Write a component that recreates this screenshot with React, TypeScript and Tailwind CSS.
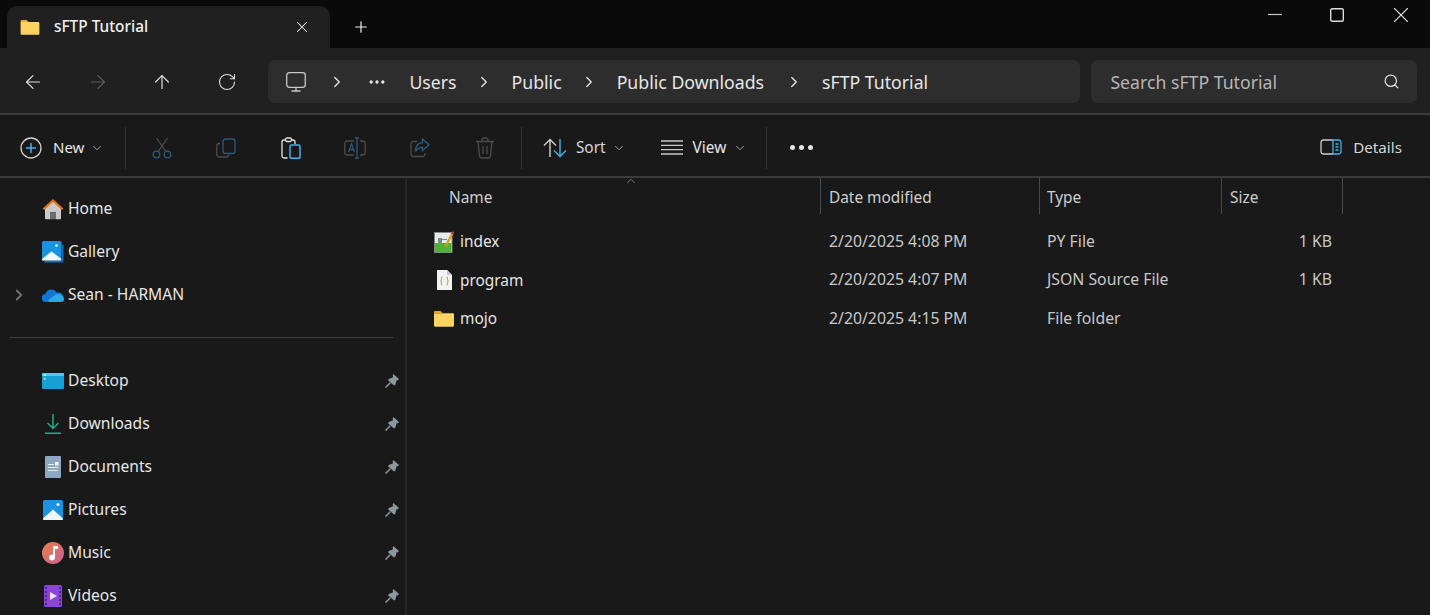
import React from 'react';
import { ArrowLeft, ArrowRight, ArrowUp, RotateCw, ChevronRight, ChevronDown, ChevronUp, X, Plus, Search, Ellipsis } from 'lucide-react';

const FONT = "font-['Noto_Sans',sans-serif]";

function FolderIcon({ className }: { className?: string }) {
  return (
    <svg viewBox="0 0 20 16" className={className}>
      <path d="M0 1.2C0 .5.5 0 1.2 0h5.3l2 2H0z" fill="#f0a91c" />
      <path d="M0 2.2h18.8c.7 0 1.2.5 1.2 1.2v11.2c0 .7-.5 1.2-1.2 1.2H1.2C.5 15.8 0 15.3 0 14.6z" fill="#fcd45f" />
    </svg>
  );
}

function CutIcon() {
  return (
    <svg viewBox="0 0 20 22" className="h-[22px] w-5" fill="none" stroke="#2b5b7c" strokeWidth="1.3">
      <circle cx="4.5" cy="17.5" r="3.3" />
      <circle cx="15.5" cy="17.5" r="3.3" />
      <path d="M6.2 14.7 15.5 1M13.8 14.7 4.5 1" stroke="#4c4c4c" />
    </svg>
  );
}

function CopyIcon() {
  return (
    <svg viewBox="0 0 20 20" className="h-5 w-5" fill="none" strokeWidth="1.3">
      <path d="M4 5.5H3a2.2 2.2 0 0 0-2.2 2.2v8.6A2.7 2.7 0 0 0 3.5 19h7a2.2 2.2 0 0 0 2.2-2.2" stroke="#4c4c4c" />
      <rect x="7" y="1" width="12" height="14.500" rx="2.5" stroke="#2b5b7c" />
    </svg>
  );
}

function PasteIcon() {
  return (
    <svg viewBox="0 0 20 22" className="h-[22px] w-5" fill="none" strokeWidth="1.3">
      <path d="M6.500 21H3a2 2 0 0 1-2-2V5a2 2 0 0 1 2-2h9a2 2 0 0 1 2 2v2" stroke="#e4e4e4" />
      <rect x="4.500" y="1" width="6" height="3.500" rx="1.500" stroke="#e4e4e4" fill="#191919" />
      <rect x="9" y="8" width="10" height="13.200" rx="1.800" stroke="#47b0ea" strokeWidth="1.500" />
    </svg>
  );
}

function RenameIcon() {
  return (
    <svg viewBox="0 0 22 22" className="h-[22px] w-[22px]" fill="none" strokeWidth="1.3">
      <path d="M10 4H3a2.200 2.200 0 0 0-2.200 2.200v9.600A2.200 2.200 0 0 0 3 18h7M16 4h3a2.200 2.200 0 0 1 2.200 2.200v9.600A2.200 2.200 0 0 1 19 18h-3" stroke="#4c4c4c" />
      <path d="M11 1h4M13 1v20M11 21h4" stroke="#2b5b7c" />
      <path d="M4.500 15 7.500 7l3 8M5.500 12.500h4" stroke="#2b5b7c" />
    </svg>
  );
}

function ShareIcon() {
  return (
    <svg viewBox="0 0 20 20" className="h-5 w-5" fill="none" strokeWidth="1.3">
      <path d="M7 3.500H3.500A2.500 2.500 0 0 0 1 6v10a2.500 2.500 0 0 0 2.500 2.500h9A2.500 2.500 0 0 0 15 16v-1" stroke="#4c4c4c" />
      <path d="M12.500 1 19 6.800l-6.500 5.700V9.300C9 9.300 6.800 10.800 5.500 13.500c0-5 2.500-8.500 7-8.800z" stroke="#2b5b7c" />
    </svg>
  );
}

function TrashIcon() {
  return (
    <svg viewBox="0 0 20 22" className="h-[22px] w-5" fill="none" stroke="#4c4c4c" strokeWidth="1.300">
      <path d="M1 4.500h18M7 4.500V3a2 2 0 0 1 2-2h2a2 2 0 0 1 2 2v1.500M3 4.500 4.500 18.500A2.500 2.500 0 0 0 7 21h6a2.500 2.500 0 0 0 2.500-2.500L17 4.500M8 9v8M12 9v8" />
    </svg>
  );
}

function SortIcon() {
  return (
    <svg viewBox="0 0 24 20" className="h-5 w-6" fill="none" strokeWidth="1.400">
      <path d="M7 19V1.500M1 7.500l6-6 6 6" stroke="#d0d0d0" />
      <path d="M17 1v17.500M11 12.500l6 6 6-6" stroke="#47b0ea" />
    </svg>
  );
}

function ViewIcon() {
  return (
    <svg viewBox="0 0 22 15" className="h-[15px] w-[22px]" stroke="#c8c8c8" strokeWidth="1.300">
      <path d="M0 1h22M0 5.300h22M0 9.600h22M0 14h22" />
    </svg>
  );
}

function DetailsIcon() {
  return (
    <svg viewBox="0 0 22 16" className="h-4 w-[22px]" fill="none" strokeWidth="1.300">
      <path d="M13 1H3.500A2.500 2.500 0 0 0 1 3.500v9A2.500 2.500 0 0 0 3.500 15H13" stroke="#cfcfcf" />
      <path d="M13 1v14h5.500a2.500 2.500 0 0 0 2.500-2.500v-9A2.500 2.500 0 0 0 18.500 1z" stroke="#47b0ea" />
      <path d="M15.500 5h3M15.500 8h3M15.500 11h3" stroke="#47b0ea" />
    </svg>
  );
}

function MonitorIcon() {
  return (
    <svg viewBox="0 0 20 20" className="h-5 w-5" fill="none" stroke="#c9c9c9" strokeWidth="1.300">
      <rect x=".7" y=".7" width="18.600" height="14.600" rx="2.500" />
      <path d="M10 15.500V19M5.500 19h9" />
    </svg>
  );
}

function NewIcon() {
  return (
    <svg viewBox="0 0 22 22" className="h-[22px] w-[22px]" fill="none" strokeWidth="1.300">
      <circle cx="11" cy="11" r="10" stroke="#cfcfcf" />
      <path d="M11 6v10M6 11h10" stroke="#47b0ea" strokeWidth="1.500" />
    </svg>
  );
}

function HomeIcon() {
  return (
    <svg viewBox="0 0 22 22" className="h-[22px] w-[22px]">
      <path d="M3 10 11 3l8 7v10.500a.8.800 0 0 1-.8.800H14v-7H8v7H3.800a.8.800 0 0 1-.8-.8z" fill="#c9c9c9" />
      <path d="M8 14.300h6v7H8z" fill="#6e6e6e" />
      <path d="M.6 10.500 11 1l10.400 9.500-1.500 1.600L11 4 2.100 12.100z" fill="#e4720f" />
    </svg>
  );
}

function GalleryIcon() {
  return (
    <svg viewBox="0 0 22 22" className="h-[22px] w-[22px]">
      <path d="M2 20h18V4h1.500v16a1.500 1.500 0 0 1-1.500 1.500H3.500A1.500 1.500 0 0 1 2 20z" fill="#1d6db5" />
      <rect x="0" y="0" width="19.500" height="19.500" rx="1.500" fill="#1993e0" />
      <path d="M0 18 9.500 10.500 19.500 18v.5a1 1 0 0 1-1 1H1a1 1 0 0 1-1-1z" fill="#eef6fb" />
      <circle cx="14.500" cy="4.500" r="1.300" fill="#eef6fb" />
    </svg>
  );
}

function CloudIcon() {
  return (
    <svg viewBox="0 0 22 14" className="h-[14px] w-[22px]">
      <path d="M4 14A4 4 0 0 1 3.500 6 6 6 0 0 1 14.500 4.500 4.800 4.800 0 0 1 18 14z" fill="#0f78d4" />
      <path d="M8 14c-1.500 0-2-1.500-1-2.500l7.500-5.500c3.500-.5 7.500 1.500 7.500 5.500 0 1.500-1 2.500-2.500 2.500z" fill="#29a8ea" />
    </svg>
  );
}

function DesktopIcon() {
  return (
    <svg viewBox="0 0 22 16" className="h-4 w-[22px]">
      <rect width="22" height="16" rx="1" fill="#16a0d6" />
      <path d="M0 1a1 1 0 0 1 1-1h20a1 1 0 0 1 1 1v2H0z" fill="#49cde6" />
      <rect x="2" y="1.500" width="1.500" height="1.500" fill="#fff" />
      <rect x="2" y="5" width="1.500" height="1.500" fill="#fff" />
    </svg>
  );
}

function DownloadsIcon() {
  return (
    <svg viewBox="0 0 16 20" className="h-5 w-4" fill="none" stroke="#1eae8a" strokeWidth="1.500">
      <path d="M8 0v14.500M2.500 9 8 14.500 13.500 9M0 19.200h16" />
    </svg>
  );
}

function DocumentsIcon() {
  return (
    <svg viewBox="0 0 16 22" className="h-[22px] w-4">
      <rect width="16" height="22" rx="1" fill="#8ea7c0" />
      <path d="M3 8h6v1H3zM3 11h10v1H3zM3 14h10v1H3z" fill="#e8eef4" />
      <rect x="10" y="6" width="3.500" height="3.500" fill="#f3f6f9" />
    </svg>
  );
}

function PicturesIcon() {
  return (
    <svg viewBox="0 0 20 20" className="h-5 w-5">
      <rect width="20" height="20" rx="1.500" fill="#1993e0" />
      <path d="M0 18.500 10 9.500l10 9v.5a1 1 0 0 1-1 1H1a1 1 0 0 1-1-1z" fill="#eef6fb" />
      <circle cx="15" cy="4.500" r="1.500" fill="#eef6fb" />
    </svg>
  );
}

function MusicIcon() {
  return (
    <svg viewBox="0 0 22 22" className="h-[22px] w-[22px]">
      <defs>
        <linearGradient id="musicFill" x1="0" y1="0" x2="1" y2="1">
          <stop offset="0" stopColor="#e8804a" />
          <stop offset="1" stopColor="#c85f96" />
        </linearGradient>
      </defs>
      <circle cx="11" cy="11" r="11" fill="url(#musicFill)" />
      <path d="M11 4h5v3h-3v8.500a3 3 0 1 1-2-2.800z" fill="#fff" />
    </svg>
  );
}

function VideosIcon() {
  return (
    <svg viewBox="0 0 18 22" className="h-[22px] w-[18px]">
      <rect width="18" height="22" rx="1.500" fill="#8b45d6" />
      <path d="M1 2h2v2H1zM1 6h2v2H1zM1 10h2v2H1zM1 14h2v2H1zM1 18h2v2H1zM15 2h2v2h-2zM15 6h2v2h-2zM15 10h2v2h-2zM15 14h2v2h-2zM15 18h2v2h-2z" fill="#4d2387" />
      <path d="M6 7l7 4-7 4z" fill="#eadcfb" />
    </svg>
  );
}

function PinIcon() {
  return (
    <svg viewBox="0 0 14 14" className="h-[14px] w-[14px]">
      <path d="M8.300 0 14 5l-1.200 1.300-1.200-.1-1.300 4.500-1.300.9L3 6.300l.8-1.400 4.300-1.700-.4-1.700z" fill="#8d97a1" />
      <path d="M5.300 8.700.5 13.500" stroke="#8d97a1" strokeWidth="1.500" />
    </svg>
  );
}

function PyFileIcon() {
  return (
    <svg viewBox="0 0 20 22" className="h-[22px] w-5">
      <rect x=".5" y="1.500" width="17.500" height="20" fill="#e8ebe9" stroke="#7d8a86" />
      <path d="M1 12h16.500v9H1z" fill="#4fb03c" />
      <path d="M4 7h4v5H4z" fill="#7b8a80" />
      <path d="M8 8.500h5" stroke="#7b8a80" strokeWidth="1" />
      <path d="M11.500 15.500 18.500 2" stroke="#d9a020" strokeWidth="2.400" />
      <path d="M18 3 19.200.7" stroke="#b5403a" strokeWidth="2.400" />
    </svg>
  );
}

function JsonFileIcon() {
  return (
    <svg viewBox="0 0 16 20" className="h-5 w-4">
      <path d="M1 0h10l5 5v15H1z" fill="#f3f3f3" />
      <path d="M11 0v5h5z" fill="#c9c9c9" />
      <path d="M6.500 7c-1.500 0-1 1.500-1 2.500s-.5 1.500-1.200 1.500c.7 0 1.200.5 1.200 1.500s-.5 2.500 1 2.500M10.500 7c1.500 0 1 1.500 1 2.500s.5 1.500 1.200 1.500c-.7 0-1.200.5-1.200 1.500s.5 2.500-1 2.500" fill="none" stroke="#b6b84a" strokeWidth="1.200" />
    </svg>
  );
}

function WindowButtons() {
  return (
    <div className="ml-auto flex h-full items-start pt-[8px]">
      <div className="mr-[48px]">
        <svg viewBox="0 0 14 14" className="h-[14px] w-[14px]" stroke="#c8c8c8" strokeWidth="1.200"><path d="M0 6.500h14" /></svg>
      </div>
      <div className="mr-[50px]">
        <svg viewBox="0 0 14 14" className="h-[14px] w-[14px]" fill="none" stroke="#dcdcdc" strokeWidth="1.400"><rect x=".7" y=".7" width="12.600" height="12.600" rx="1.500" /></svg>
      </div>
      <div className="mr-[22px]">
        <svg viewBox="0 0 14 14" className="h-[14px] w-[14px]" stroke="#e6e6e6" strokeWidth="1.200"><path d="M0 0l14 14M14 0 0 14" /></svg>
      </div>
    </div>
  );
}

function NavButton({ children }: { children: React.ReactNode }) {
  return <div className="flex h-full w-[64.6px] shrink-0 items-center justify-center">{children}</div>;
}

function Sep() {
  return <div className="h-[42px] w-px shrink-0 bg-[#333333]" />;
}

function SideItem({ icon, label, pinned, chevron }: { icon: React.ReactNode; label: string; pinned?: boolean; chevron?: boolean }) {
  return (
    <div className="flex h-[43px] items-center">
      <div className="flex w-[38px] shrink-0 items-center justify-center">
        {chevron && <ChevronRight className="h-[18px] w-[18px] text-[#707070]" strokeWidth={2.6} />}
      </div>
      <div className="flex w-[30px] shrink-0 items-center justify-start pl-[4px]">
        <div className="flex w-[22px] items-center justify-center">{icon}</div>
      </div>
      <span className="flex-1 text-[15.6px] text-[#e6e6e6]">{label}</span>
      {pinned && <div className="mr-[6px]"><PinIcon /></div>}
    </div>
  );
}

const COLUMNS = 'grid grid-cols-[414px_219px_182px_121px]';

function HeaderCell({ label, className }: { label: string; className: string }) {
  return (
    <div className={`flex h-[36px] items-center border-r border-[#4a4a4a] pt-[4px] text-[15.4px] text-[#cfcfcf] ${className}`}>
      {label}
    </div>
  );
}

function FileRow({ icon, name, date, type, size }: { icon: React.ReactNode; name: string; date: string; type: string; size?: string }) {
  return (
    <div className={`${COLUMNS} h-[38.5px] items-center text-[15.8px]`}>
      <div className="flex items-center pl-[27px]">
        <div className="flex w-[20px] items-center justify-center">{icon}</div>
        <span className="ml-[6px] text-[15.4px] text-[#e6e6e6]">{name}</span>
      </div>
      <span className="pl-2 text-[#c8c8c8]">{date}</span>
      <span className="pl-[7px] text-[#c8c8c8]">{type}</span>
      <span className="pr-[11px] text-right text-[#c8c8c8]">{size}</span>
    </div>
  );
}

export default function App() {
  return (
    <div className={`flex h-[615px] w-[1430px] flex-col overflow-hidden bg-[#191919] ${FONT}`}>
      {/* Title bar */}
      <div className="flex h-[48px] shrink-0 items-end bg-[#0a0a0a] pl-[7px]">
        <div className="flex h-[42px] w-[323px] items-center rounded-t-[10px] bg-[#202020] pl-[13px] pr-[19px]">
          <FolderIcon className="h-[15px] w-5" />
          <span className="ml-[14px] flex-1 text-[15.4px] font-medium text-[#f0f0f0]">sFTP Tutorial</span>
          <X className="h-[18px] w-[18px] text-[#e6e6e6]" strokeWidth={1.4} />
        </div>
        <div className="flex h-[42px] items-center pl-[22px]">
          <Plus className="h-[18px] w-[18px] text-[#f0f0f0]" strokeWidth={1.6} />
        </div>
        <WindowButtons />
      </div>

      {/* Navigation bar */}
      <div className="flex h-[67px] shrink-0 items-center border-b-2 border-[#3b3b3b] bg-[#202020] pl-[1px] pr-[13px] pt-[2px]">
        <NavButton><ArrowLeft className="h-[22px] w-[22px] text-[#e0e0e0]" strokeWidth={1.3} /></NavButton>
        <NavButton><ArrowRight className="h-[22px] w-[22px] text-[#5e5e5e]" strokeWidth={1.3} /></NavButton>
        <NavButton><ArrowUp className="h-[22px] w-[22px] text-[#e0e0e0]" strokeWidth={1.3} /></NavButton>
        <NavButton><RotateCw className="h-5 w-5 text-[#e0e0e0]" strokeWidth={1.3} /></NavButton>
        <div className="ml-[9px] flex h-[43px] w-[812px] items-center rounded-[7px] bg-[#2d2d2d] pl-[18px] text-[17.7px] text-[#e6e6e6]">
          <MonitorIcon />
          <ChevronRight className="ml-[22px] h-[18px] w-[18px]" strokeWidth={1.8} />
          <Ellipsis className="ml-[21px] h-5 w-5" strokeWidth={2} />
          <span className="ml-[22px] pt-[2px]">Users</span>
          <ChevronRight className="ml-[18px] h-[18px] w-[18px]" strokeWidth={1.8} />
          <span className="ml-[19px] pt-[2px]">Public</span>
          <ChevronRight className="ml-[18px] h-[18px] w-[18px]" strokeWidth={1.8} />
          <span className="ml-[19px] pt-[2px]">Public Downloads</span>
          <ChevronRight className="ml-[21px] h-[18px] w-[18px]" strokeWidth={1.8} />
          <span className="ml-[19px] pt-[2px]">sFTP Tutorial</span>
        </div>
        <div className="ml-[11px] flex h-[43px] flex-1 items-center justify-between rounded-[7px] bg-[#2d2d2d] pl-[19px] pr-[17px]">
          <span className="pt-[2px] text-[17.7px] text-[#b5b5b5]">Search sFTP Tutorial</span>
          <Search className="h-[17px] w-[17px] text-[#dcdcdc]" strokeWidth={1.8} />
        </div>
      </div>

      {/* Command bar */}
      <div className="flex h-[63px] shrink-0 items-center border-b-2 border-[#3b3b3b] pl-[20px] pr-[28px] pt-[4px] text-[15.4px]">
        <NewIcon />
        <span className="ml-[11px] text-[15px] text-[#e6e6e6]">New</span>
        <ChevronDown className="ml-[6px] h-[14px] w-[14px] text-[#b5b5b5]" strokeWidth={1.5} />
        <div className="ml-[21px]"><Sep /></div>
        <div className="ml-[3px] flex h-full">
          <NavButton><CutIcon /></NavButton>
          <NavButton><CopyIcon /></NavButton>
          <NavButton><PasteIcon /></NavButton>
          <NavButton><RenameIcon /></NavButton>
          <NavButton><ShareIcon /></NavButton>
          <NavButton><TrashIcon /></NavButton>
        </div>
        <div className="ml-[4px]"><Sep /></div>
        <div className="ml-[21px]"><SortIcon /></div>
        <span className="ml-[9px] text-[#d6d6d6]">Sort</span>
        <ChevronDown className="ml-[6px] h-[14px] w-[14px] text-[#b5b5b5]" strokeWidth={1.5} />
        <div className="ml-[35px]"><ViewIcon /></div>
        <span className="ml-[10px] text-[#e6e6e6]">View</span>
        <ChevronDown className="ml-[7px] h-[14px] w-[14px] text-[#b5b5b5]" strokeWidth={1.5} />
        <div className="ml-[19px]"><Sep /></div>
        <div className="ml-[23px] flex gap-[4px]">
          <span className="h-[5px] w-[5px] rounded-full bg-[#e6e6e6]" />
          <span className="h-[5px] w-[5px] rounded-full bg-[#e6e6e6]" />
          <span className="h-[5px] w-[5px] rounded-full bg-[#e6e6e6]" />
        </div>
        <div className="ml-auto flex items-center">
          <DetailsIcon />
          <span className="ml-[11px] text-[15.2px] text-[#d6d6d6]">Details</span>
        </div>
      </div>

      {/* Body */}
      <div className="flex min-h-0 flex-1">
        <div className="w-[405px] shrink-0 pt-[9px]">
          <SideItem icon={<HomeIcon />} label="Home" />
          <SideItem icon={<GalleryIcon />} label="Gallery" />
          <SideItem icon={<CloudIcon />} label="Sean - HARMAN" chevron />
          <div className="my-[21px] ml-[10px] mr-[12px] h-px bg-[#3f3f3f]" />
          <SideItem icon={<DesktopIcon />} label="Desktop" pinned />
          <SideItem icon={<DownloadsIcon />} label="Downloads" pinned />
          <SideItem icon={<DocumentsIcon />} label="Documents" pinned />
          <SideItem icon={<PicturesIcon />} label="Pictures" pinned />
          <SideItem icon={<MusicIcon />} label="Music" pinned />
          <SideItem icon={<VideosIcon />} label="Videos" pinned />
        </div>
        <div className="w-[2px] shrink-0 bg-[#262626]" />
        <div className="relative min-w-0 flex-1">
          <ChevronUp className="absolute left-[217px] top-[-4px] h-[14px] w-[14px] text-[#8a8a8a]" strokeWidth={1.4} />
          <div className={COLUMNS}>
            <HeaderCell label="Name" className="pl-[42px]" />
            <HeaderCell label="Date modified" className="pl-2" />
            <HeaderCell label="Type" className="pl-[7px]" />
            <HeaderCell label="Size" className="pl-2" />
          </div>
          <div className="pt-[8.4px]">
            <FileRow icon={<PyFileIcon />} name="index" date="2/20/2025 4:08 PM" type="PY File" size="1 KB" />
            <FileRow icon={<JsonFileIcon />} name="program" date="2/20/2025 4:07 PM" type="JSON Source File" size="1 KB" />
            <FileRow icon={<FolderIcon className="h-4 w-5" />} name="mojo" date="2/20/2025 4:15 PM" type="File folder" />
          </div>
        </div>
      </div>
    </div>
  );
}
